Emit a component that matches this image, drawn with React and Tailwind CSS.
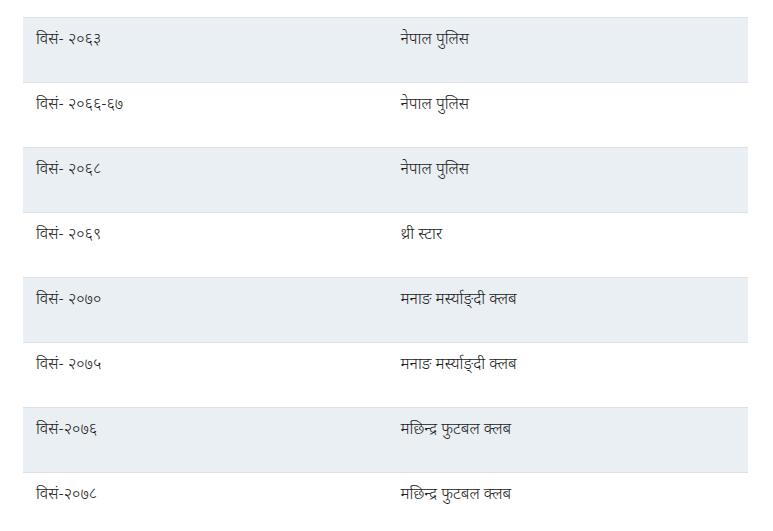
const rows = [
  ["विसं- २०६३", "नेपाल पुलिस"],
  ["विसं- २०६६-६७", "नेपाल पुलिस"],
  ["विसं- २०६८", "नेपाल पुलिस"],
  ["विसं- २०६९", "थ्री स्टार"],
  ["विसं- २०७०", "मनाङ मर्स्याङ्दी क्लब"],
  ["विसं- २०७५", "मनाङ मर्स्याङ्दी क्लब"],
  ["विसं-२०७६", "मछिन्द्र फुटबल क्लब"],
  ["विसं-२०७८", "मछिन्द्र फुटबल क्लब"],
];

export default function App() {
  return (
    <div className="bg-white w-[773px] h-[531px] overflow-hidden pt-[17px] pl-[23px] pr-[25px]">
      <div className="flex flex-col text-[16px] font-[350] leading-6 text-[#212121] font-['Noto_Sans_Devanagari','Noto_Sans',sans-serif]">
        {rows.map((r, i) => (
          <div
            key={i}
            className={`grid grid-cols-2 h-[65px] shrink-0 border-t border-[#dee2e6] ${i % 2 === 0 ? "bg-[#eaeff4]" : "bg-white"}`}
          >
            <div className="px-[13px] pt-[11px]">{r[0]}</div>
            <div className="px-[13px] pt-[11px] pl-[15px]">{r[1]}</div>
          </div>
        ))}
      </div>
    </div>
  );
}
